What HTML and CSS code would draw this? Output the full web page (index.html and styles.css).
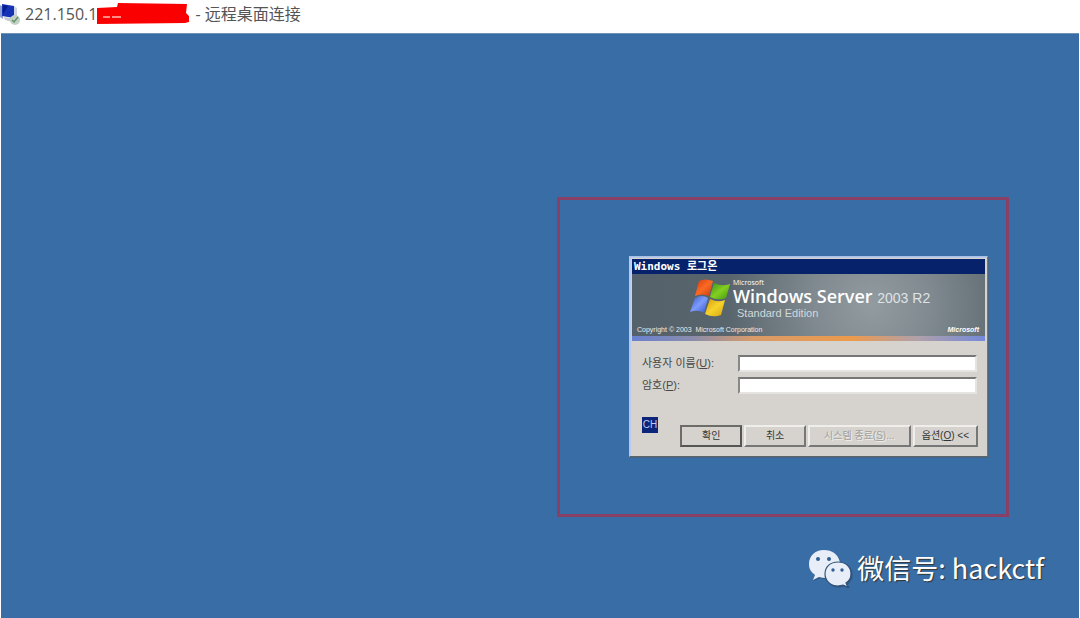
FILE: index.html
```html
<!DOCTYPE html>
<html lang="zh-CN">
<head>
<meta charset="utf-8">
<title>远程桌面连接</title>
<link rel="stylesheet" href="styles.css">
</head>
<body>
<header class="titlebar">
  <svg class="titlebar-icon" viewBox="0 0 20 22" aria-hidden="true">
    <path d="M0 2 L3 4 V16 L0 14Z" fill="#8b9fd0"/>
    <path d="M2 1 L14 3 V15 L2 13Z" fill="#1733b5"/>
    <path d="M3 2 L8 3 L3 11Z" fill="#071d8c"/>
    <path d="M14 3 L17 5 V15 L14 15Z" fill="#cdd5e4"/>
    <path d="M4 14 L11 15 L12 19 L5 17Z" fill="#c6cbd0"/>
    <circle cx="15" cy="17" r="5" fill="#c3d0c4"/>
    <path d="M12 17 L14 19 L18 14" fill="none" stroke="#62946b" stroke-width="1.5"/>
  </svg>
  <h1 class="titlebar-text"><span class="address">221.150.1</span><svg class="redaction" viewBox="0 0 92 21" aria-hidden="true"><path d="M0 5 L20 4 L21 0 L90 1 L89 10 L92 13 V19 L88 20 L0 21Z" fill="#fb0000"/><path d="M6 14H13M15 14H24" stroke="#ffb9b0" stroke-width="1.5"/></svg><span>- 远程桌面连接</span></h1>
</header>
<main class="desktop">
  <div class="highlight"></div>
  <section class="dialog" lang="ko" aria-labelledby="dialog-title">
    <h2 class="dialog-title" id="dialog-title">Windows 로그온</h2>
    <div class="banner">
      <div class="brand">
        <svg class="flag" viewBox="0 0 42 40" aria-hidden="true">
          <defs>
            <linearGradient id="red" x2="1" y2="1"><stop stop-color="#d9380c"/><stop offset=".5" stop-color="#f96b24"/><stop offset="1" stop-color="#c9350e"/></linearGradient>
            <linearGradient id="green" x2="1" y2="1"><stop stop-color="#3c8f18"/><stop offset=".5" stop-color="#83cf20"/><stop offset="1" stop-color="#419713"/></linearGradient>
            <linearGradient id="blue" x2="1" y2="1"><stop stop-color="#3558cb"/><stop offset=".5" stop-color="#7d9bfa"/><stop offset="1" stop-color="#3153c6"/></linearGradient>
            <linearGradient id="yellow" x2="1" y2="1"><stop stop-color="#d69a0b"/><stop offset=".5" stop-color="#f6d32b"/><stop offset="1" stop-color="#d8a40d"/></linearGradient>
          </defs>
          <path d="M9 3 Q15 0 23 3 L19 18 Q12 15 5 18Z" fill="url(#red)"/>
          <path d="M24 5 Q32 9 40 6 L36 20 Q28 23 20 19Z" fill="url(#green)"/>
          <path d="M5 20 Q12 16 18 20 L14 35 Q8 31 0 34Z" fill="url(#blue)"/>
          <path d="M20 21 Q28 25 35 22 L31 37 Q23 40 15 36Z" fill="url(#yellow)"/>
        </svg>
        <div class="brand-text">
          <span class="maker">Microsoft</span>
          <span class="product"><b>Windows Server</b> <span class="version">2003 R2</span></span>
          <span class="edition">Standard Edition</span>
        </div>
      </div>
      <div class="legal"><span>Copyright © 2003&nbsp; Microsoft Corporation</span><span class="ms">Microsoft</span></div>
    </div>
    <form class="logon">
      <div class="fields">
        <label for="user">사용자 이름(<u>U</u>):</label><input id="user" type="text">
        <label for="pass">암호(<u>P</u>):</label><input id="pass" type="password">
      </div>
      <div class="actions">
        <span class="ime">CH</span>
        <button class="button button-default" type="submit">확인</button>
        <button class="button button-cancel" type="button">취소</button>
        <button class="button button-shutdown" type="button" disabled>시스템 종료(<u>S</u>)...</button>
        <button class="button button-options" type="button">옵션(<u>O</u>) &lt;&lt;</button>
      </div>
    </form>
  </section>
  <div class="watermark">
    <svg class="wechat" viewBox="0 0 44 38" aria-hidden="true">
      <path d="M16 1 C7 1 1 7 1 15 C1 20 3 23 7 26 L5 31 L11 28 Q14 29 18 29 L32 13 C30 5 24 1 16 1Z" fill="#e8eef7"/>
      <path d="M30 13 C22 13 17 18 17 25 C17 32 23 37 30 37 L35 36 L40 38 L38 34 C41 32 43 29 43 25 C43 18 38 13 30 13Z" fill="#e8eef7" stroke="#31547c" stroke-width="1.2"/>
      <g fill="#315f94"><circle cx="10" cy="10" r="2"/><circle cx="21" cy="10" r="2"/><circle cx="25" cy="21" r="1.7"/><circle cx="34" cy="21" r="1.7"/></g>
    </svg>
    <span>微信号: hackctf</span>
  </div>
</main>
</body>
</html>
```
FILE: styles.css
```css
* { box-sizing: border-box; }

body {
  margin: 0;
  min-height: 100vh;
  display: flex;
  flex-direction: column;
  background: #fff;
  font-family: "Liberation Sans", "Noto Sans CJK SC", sans-serif;
}

.titlebar {
  display: flex;
  align-items: center;
  gap: 5px;
  height: 33px;
  padding-bottom: 6px;
}

.titlebar-icon { width: 20px; height: 22px; }

.titlebar-text {
  display: flex;
  align-items: center;
  margin: 0;
  color: #555;
  font: 400 16px/24px "Open Sans", "Noto Sans CJK SC", sans-serif;
}

.redaction {
  width: 92px;
  height: 21px;
  margin: 0 6px 0 0;
}

.desktop {
  position: relative;
  flex: 1;
  margin: 0 1px;
  overflow: hidden;
  background: #396da6;
  border-top: 1px solid #6f93b6;
}

.highlight {
  position: absolute;
  left: 556px;
  top: 163px;
  width: 452px;
  height: 320px;
  border: 3px solid #8a3f66;
}

.dialog {
  position: absolute;
  left: 628px;
  top: 222px;
  width: 359px;
  padding: 2px;
  background: #d6d3ce;
  border: 1px solid;
  border-color: #a9c0e6 #6e7780 #5b6468 #b9cbe4;
  box-shadow: inset 1px 1px #b7c9eb, 1px 1px #476482;
  font-family: "Liberation Sans", "Noto Sans CJK KR", sans-serif;
}

.dialog-title {
  margin: 0;
  padding-left: 2px;
  background: #06226b;
  color: #fff;
  font: 700 11px/15px "DejaVu Sans Mono", "Noto Sans CJK KR", monospace;
}

.banner {
  display: flex;
  flex-direction: column;
  height: 67px;
  border-bottom: 5px solid;
  border-image: linear-gradient(90deg, #6680d4, #8a8cab 18%, #d99b68 35%, #ed9a4c 62%, #b0a0aa 80%, #7088dc) 5;
  background: radial-gradient(circle at 68% 50%, #929ba0, #7f898f 25%, #59656d 60%, #55616a);
  color: #fff;
}

.brand {
  display: flex;
  flex: 1;
  padding: 4px 0 0 58px;
}

.flag { width: 42px; height: 40px; }

.brand-text {
  display: flex;
  flex-direction: column;
  padding-left: 1px;
  white-space: nowrap;
  font-family: "Open Sans", sans-serif;
}

.maker { font-size: 7px; line-height: 9px; }
.product { font-size: 18px; line-height: 19px; }
.product b { font-weight: 600; }
.version { color: #dfe3e6; font-family: "Liberation Sans", sans-serif; font-size: 14px; }
.edition { padding-left: 4px; color: #d3d8db; font-family: "Liberation Sans", sans-serif; font-size: 11px; line-height: 11px; }

.legal {
  display: flex;
  align-items: center;
  justify-content: space-between;
  padding: 0 6px 1px 5px;
  color: #e9ecee;
  font-size: 7px;
  line-height: 10px;
}

.ms { color: #fff; font-weight: 700; font-style: italic; }

.logon { padding: 14px 7px 7px 10px; }

.fields {
  display: grid;
  grid-template-columns: 96px 1fr;
  row-gap: 5px;
  padding-right: 1px;
  align-items: center;
  color: #494949;
  font-size: 11px;
  line-height: 17px;
}

.fields input {
  width: 100%;
  height: 17px;
  padding: 0 2px;
  background: #fff;
  border: 2px solid;
  border-color: #777 #e6e4e0 #e6e4e0 #888;
  border-radius: 0;
  outline: 0;
}

.actions {
  display: flex;
  gap: 2px;
  margin-top: 23px;
}

.ime {
  align-self: flex-start;
  width: 16px;
  height: 16px;
  margin-right: 20px;
  background: #0c2578;
  color: #bdc8ee;
  font-size: 10px;
  line-height: 16px;
  text-align: center;
}

.button {
  height: 22px;
  margin-top: 8px;
  padding: 0;
  background: #d6d3ce;
  border: 2px solid;
  border-color: #efeeeb #777 #777 #efeeeb;
  border-radius: 0;
  color: #333;
  font: 10px/16px "Liberation Sans", "Noto Sans CJK KR", sans-serif;
  white-space: nowrap;
}

.button-default { flex: 62; border-color: #6c6c68 #555 #555 #6c6c68; }
.button-cancel { flex: 61; }
.button-shutdown { flex: 105; color: #a3a19d; text-shadow: 1px 1px #efeeeb; }
.button-options { flex: 65; }

.watermark {
  position: absolute;
  right: 35px;
  bottom: 30px;
  display: flex;
  align-items: center;
  gap: 5px;
  color: #fff;
  font: 400 27px/40px "Noto Sans CJK SC", sans-serif;
  text-shadow: 1px 1px 1px #333;
}

.wechat {
  width: 44px;
  height: 38px;
  filter: drop-shadow(1px 1px 0 #31547c);
}
```
